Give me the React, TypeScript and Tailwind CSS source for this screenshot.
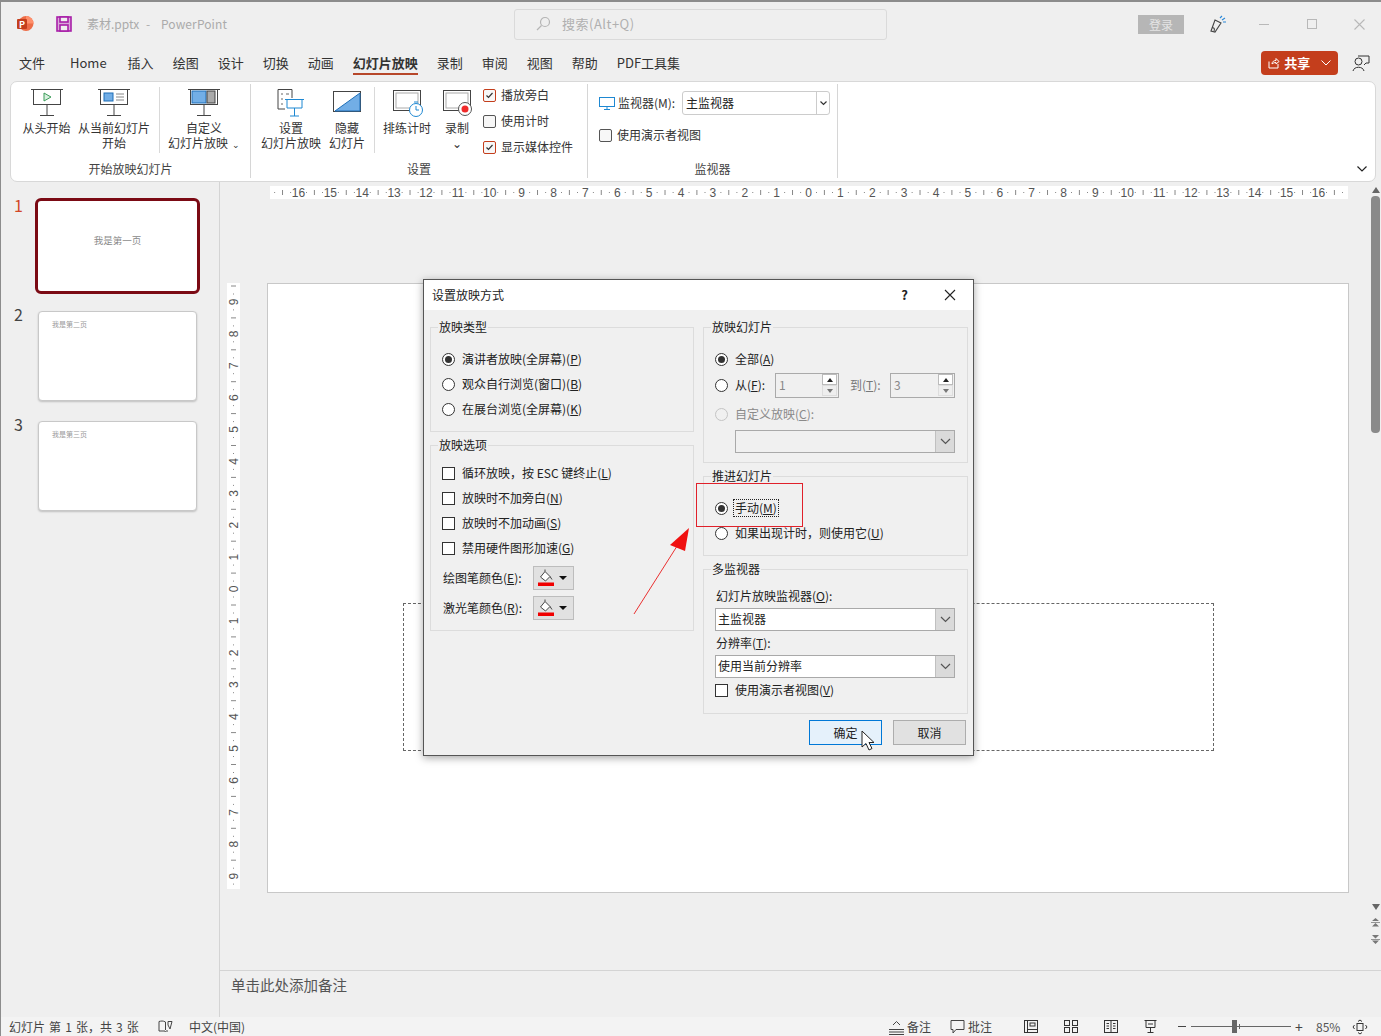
import React from 'react';

const TABS = ['插入', '绘图', '设计', '切换', '动画'];
const TABS2 = ['录制', '审阅', '视图', '帮助', 'PDF工具集'];

function Check({ on, accent }: { on?: boolean; accent?: boolean }) {
  return (
    <span className={`w-[13px] h-[13px] shrink-0 border flex items-center justify-center bg-[#f7f7f7] ${on && accent ? 'border-[#c43e1c] rounded-[2px]' : accent ? 'border-[#555] rounded-[2px]' : 'border-[#333] bg-white'}`}>
      {on && (
        <svg width="11" height="11" viewBox="0 0 11 11" fill="none" stroke="#333" strokeWidth="1.2">
          <path d="M2.5 5.5 L4.5 7.5 L8.5 3" />
        </svg>
      )}
    </span>
  );
}

function Radio({ on, off }: { on?: boolean; off?: boolean }) {
  return (
    <span className={`w-[13px] h-[13px] shrink-0 rounded-full border flex items-center justify-center ${off ? 'border-[#c4c4c4] bg-[#f0f0f0]' : 'border-[#333] bg-white'}`}>
      {on && <span className="w-[7px] h-[7px] rounded-full bg-[#333]" />}
    </span>
  );
}

function Group({ title, className, children }: { title: string; className: string; children: React.ReactNode }) {
  return (
    <fieldset className={`border border-[#dcdcdc] ${className}`}>
      <legend className="-ml-[4px] px-px h-4 leading-4 text-[12px] text-[#222]">{title}</legend>
      {children}
    </fieldset>
  );
}

function Row({ h = 'h-[25px]', children }: { h?: string; children: React.ReactNode }) {
  return <div className={`flex items-center gap-[7px] ${h} [&>span:last-child]:-mt-px`}>{children}</div>;
}

function Combo({ text, off }: { text?: string; off?: boolean }) {
  return (
    <div className={`flex border border-[#a9a9a9] h-[23px] items-stretch ${off ? 'bg-[#f0f0f0]' : 'bg-white'}`}>
      <span className="flex-1 px-[2px] text-[12px] leading-[20px] text-[#222]">{text}</span>
      <span className="w-[19px] bg-[#dadada] border-l border-[#c0c0c0] flex items-center justify-center">
        <svg width="11" height="7" viewBox="0 0 11 7" fill="none" stroke="#555" strokeWidth="1.2"><path d="M1 1 L5.5 5.5 L10 1" /></svg>
      </span>
    </div>
  );
}

function Spin({ value, w }: { value: string; w: string }) {
  return (
    <div className={`${w} h-[25px] border border-[#aaaaaa] flex items-center pl-[3px] bg-[#f0f0f0] text-[12px] text-[#888]`}>
      <span className="flex-1">{value}</span>
      <div className="w-[15px] h-[22px] mr-px flex flex-col">
        <span className="h-[11px] bg-white border border-[#bbb] flex items-center justify-center">
          <span className="w-0 h-0 border-x-[3px] border-x-transparent border-b-[4px] border-b-[#222]" />
        </span>
        <span className="h-[11px] bg-[#eee] border border-[#ddd] flex items-center justify-center">
          <span className="w-0 h-0 border-x-[3px] border-x-transparent border-t-[4px] border-t-[#777]" />
        </span>
      </div>
    </div>
  );
}

function PenColor({ label }: { label: React.ReactNode }) {
  return (
    <div className="flex items-center h-[30px]">
      <span className="w-[91px] pl-px text-[12px] text-[#222]">{label}</span>
      <span className="w-[41px] h-[24px] bg-[#e1e1e1] border border-[#bdbdbd] flex items-center pl-[3px] gap-[4px]">
        <svg width="18" height="18" viewBox="0 0 18 18" fill="none">
          <path d="M3.5 8 L8 2.5 L13 7.5 L8.5 12 Z" fill="#fff" stroke="#444" />
          <path d="M8 2.5 V0.5 M13 7.5 L15 10.5" stroke="#444" />
          <rect x="1" y="13.5" width="16" height="3.5" fill="#f00000" />
        </svg>
        <span className="w-0 h-0 border-x-[4px] border-x-transparent border-t-[4px] border-t-[#111]" />
      </span>
    </div>
  );
}

function Screen({ children }: { children: React.ReactNode }) {
  return (
    <svg width="34" height="32" viewBox="0 0 34 32" fill="none" stroke="#444" strokeWidth="1">
      <path d="M1 1.5 H33" />
      <rect x="3.5" y="1.5" width="27" height="15" fill="#fff" />
      <path d="M17 16.5 V27.5 M10 27.5 H24" />
      {children}
    </svg>
  );
}

function RibbonBtn({ w, lines, icon, chevron }: { w: string; lines: string[]; icon: React.ReactNode; chevron?: boolean }) {
  return (
    <div className={`${w} shrink-0 flex flex-col items-center pt-[4px]`}>
      <div className="h-[31px] flex items-start justify-center">{icon}</div>
      <div className="text-[12px] leading-[15px] text-[#333] text-center whitespace-nowrap mt-[1px]">
        {lines.map((l, i) => (
          <div key={i}>{l}{chevron && i === lines.length - 1 && <span className="text-[9px] ml-1">⌄</span>}</div>
        ))}
      </div>
    </div>
  );
}

function RibbonGroup({ w, title, children }: { w: string; title: string; children: React.ReactNode }) {
  return (
    <div className={`${w} shrink-0 flex flex-col border-r border-[#d6d6d6] h-[94px] mt-[2px]`}>
      <div className="flex h-[74px] items-start">{children}</div>
      <div className="text-[12px] leading-[16px] text-center text-[#444] mt-[3px]">{title}</div>
    </div>
  );
}

const Sep = () => <span className="w-px h-[66px] bg-[#d9d9d9] shrink-0 mt-[3px]" />;

function HRuler() {
  const items = Array.from({ length: 35 }, (_, k) => k - 17);
  return (
    <svg width="1078" height="13" className="bg-white block overflow-visible font-['Liberation_Sans',sans-serif]">
      {items.map((i) => {
        const x = 538.5 + i * 31.875;
        return (
          <g key={i}>
            {Math.abs(i) <= 16 && <text x={x} y="11" textAnchor="middle" fontSize="12" fill="#555">{Math.abs(i)}</text>}
            {x + 16 < 1078 && x + 16 > 0 && <path d={`M${x + 15.9} 4 V9`} stroke="#888" />}
            {x + 8 < 1078 && x + 8 > 0 && <path d={`M${x + 8} 6 V7`} stroke="#888" />}
            {x + 24 < 1078 && x + 24 > 0 && <path d={`M${x + 24} 6 V7`} stroke="#888" />}
          </g>
        );
      })}
    </svg>
  );
}

function VRuler() {
  const items = Array.from({ length: 20 }, (_, k) => k - 10);
  return (
    <svg width="13" height="606" className="bg-white block shrink-0 overflow-visible font-['Liberation_Sans',sans-serif]">
      {items.map((i) => {
        const y = 306 + i * 31.9;
        return (
          <g key={i}>
            {Math.abs(i) <= 9 && <text x="0" y="0" transform={`translate(11 ${y}) rotate(-90)`} textAnchor="middle" fontSize="12" fill="#555">{Math.abs(i)}</text>}
            {y + 16 > 0 && y + 16 < 606 && <path d={`M4 ${y + 16} H9`} stroke="#888" />}
            {y + 8 > 0 && y + 8 < 606 && <path d={`M6 ${y + 8} H7`} stroke="#888" />}
            {y + 24 > 0 && y + 24 < 606 && <path d={`M6 ${y + 24} H7`} stroke="#888" />}
          </g>
        );
      })}
    </svg>
  );
}

function Dialog() {
  return (
    <div className="absolute left-[422px] top-[277px] w-[551px] h-[477px] bg-[#f0f0f0] border border-[#555] shadow-[0_2px_8px_rgba(0,0,0,0.35)] flex flex-col text-[#222]">
      <div className="h-[30px] bg-white flex items-center pl-2 shrink-0">
        <span className="text-[12px] flex-1 -mt-px">设置放映方式</span>
        <span className="text-[13px] font-semibold w-[45px] text-center">?</span>
        <span className="w-[46px] flex justify-center">
          <svg width="12" height="12" viewBox="0 0 12 12" stroke="#222" strokeWidth="1.1"><path d="M1 1 L11 11 M11 1 L1 11" /></svg>
        </span>
      </div>
      <div className="flex pl-[6px] pt-[9px] gap-[9px]">
        <div className="w-[264px] flex flex-col gap-[5px]">
          <Group title="放映类型" className="h-[113px] pl-[11px]">
            <div className="pt-[12px] text-[12px]">
              <Row><Radio on /><span>演讲者放映(全屏幕)(<u>P</u>)</span></Row>
              <Row><Radio /><span>观众自行浏览(窗口)(<u>B</u>)</span></Row>
              <Row><Radio /><span>在展台浏览(全屏幕)(<u>K</u>)</span></Row>
            </div>
          </Group>
          <Group title="放映选项" className="h-[194px] pl-[11px]">
            <div className="pt-[8px] text-[12px]">
              <Row><Check /><span>循环放映，按 ESC 键终止(<u>L</u>)</span></Row>
              <Row><Check /><span>放映时不加旁白(<u>N</u>)</span></Row>
              <Row><Check /><span>放映时不加动画(<u>S</u>)</span></Row>
              <Row><Check /><span>禁用硬件图形加速(<u>G</u>)</span></Row>
              <div className="mt-[2px]">
                <PenColor label={<>绘图笔颜色(<u>E</u>):</>} />
                <PenColor label={<>激光笔颜色(<u>R</u>):</>} />
              </div>
            </div>
          </Group>
        </div>
        <div className="w-[265px] flex flex-col gap-[5px]">
          <Group title="放映幻灯片" className="h-[144px] pl-[11px] pr-[12px]">
            <div className="pt-[12px] text-[12px]">
              <Row><Radio on /><span>全部(<u>A</u>)</span></Row>
              <Row h="h-[26px]">
                <Radio />
                <span className="w-[33px]">从(<u>F</u>):</span>
                <Spin value="1" w="w-[64px]" />
                <span className="text-[#777] ml-[4px] w-[33px]">到(<u>T</u>):</span>
                <Spin value="3" w="w-[65px]" />
              </Row>
              <div className="h-[3px]" />
              <Row h="h-[26px]"><Radio off /><span className="text-[#8a8a8a]">自定义放映(<u>C</u>):</span></Row>
              <div className="ml-[20px] mt-[3px]"><Combo off /></div>
            </div>
          </Group>
          <Group title="推进幻灯片" className="h-[88px] pl-[11px]">
            <div className="pt-[12px] text-[12px]">
              <Row>
                <Radio on />
                <span className="border border-dotted border-[#222] -ml-[2px] px-px h-[18px] leading-[16px]">手动(<u>M</u>)</span>
              </Row>
              <Row><Radio /><span>如果出现计时，则使用它(<u>U</u>)</span></Row>
            </div>
          </Group>
          <Group title="多监视器" className="h-[153px] pl-[11px] pr-[12px]">
            <div className="pt-[10px] text-[12px]">
              <div className="h-[18px] leading-[18px] pl-px">幻灯片放映监视器(<u>O</u>):</div>
              <div className="mt-[3px]"><Combo text="主监视器" /></div>
              <div className="h-[18px] leading-[18px] pl-px mt-[3px]">分辨率(<u>T</u>):</div>
              <div className="mt-[3px]"><Combo text="使用当前分辨率" /></div>
              <Row h="h-[25px]"><Check /><span>使用演示者视图(<u>V</u>)</span></Row>
            </div>
          </Group>
        </div>
      </div>
      <div className="flex justify-end gap-[11px] pr-[7px] mt-[6px] text-[12px]">
        <button className="w-[73px] h-[25px] border border-[#0078d7] bg-[#e5f1fb]">确定</button>
        <button className="w-[73px] h-[25px] border border-[#adadad] bg-[#e1e1e1]">取消</button>
      </div>
    </div>
  );
}

export default function App() {
  return (
    <div className="relative w-[1381px] h-[1036px] overflow-hidden bg-[#efefef] border-t-2 border-l border-[#8c8c8c] font-['Noto_Sans_CJK_SC',sans-serif] flex flex-col text-[#333]">
      {/* title bar */}
      <div className="h-[44px] shrink-0 flex items-center pl-[14px]">
        <svg width="20" height="20" viewBox="0 0 20 20" className="shrink-0">
          <circle cx="11" cy="9.5" r="7.5" fill="#ed6c47" />
          <path d="M11 2 A7.5 7.5 0 0 1 18.5 9.5 H11 Z" fill="#ff8f6b" />
          <rect x="2" y="5" width="10" height="10" rx="1" fill="#c43e1c" />
          <text x="4" y="13.5" fontSize="9" fontWeight="700" fill="#fff">P</text>
        </svg>
        <svg width="18" height="18" viewBox="0 0 18 18" className="ml-[20px] shrink-0" fill="none" stroke="#a81fa8" strokeWidth="1.6">
          <rect x="2" y="2" width="14" height="14" fill="#d9a8d9" />
          <rect x="5" y="2" width="8" height="5" fill="#efefef" />
          <rect x="5" y="10" width="8" height="6" fill="#efefef" />
        </svg>
        <span className="ml-[14px] text-[12px] text-[#ababab] w-[59px]">素材.pptx</span>
        <span className="text-[12px] text-[#ababab] w-[15px]">-</span>
        <span className="text-[12px] text-[#ababab] w-[65px] tracking-[0.1px]">PowerPoint</span>
        <div className="ml-[288px] w-[373px] h-[31px] border border-[#dadada] rounded-[3px] flex items-center pl-[20px] shrink-0">
          <svg width="16" height="16" viewBox="0 0 16 16" fill="none" stroke="#b5b5b5" strokeWidth="1.2"><circle cx="10" cy="6" r="4.5" /><path d="M6.5 9.5 L2 14" /></svg>
          <span className="ml-[11px] text-[13px] text-[#b0b0b0] tracking-[0.5px]">搜索(Alt+Q)</span>
        </div>
        <span className="ml-[251px] w-[46px] h-[19px] bg-[#b6b6b6] text-[#e4e4e4] text-[12px] leading-[19px] text-center shrink-0">登录</span>
        <svg width="20" height="20" viewBox="0 0 20 20" className="ml-[23px] shrink-0" fill="none" stroke="#444" strokeWidth="1.1">
          <path d="M4 17 L8 6 L14 9 L8 18 Z M5 14 C7 13 8 15 7 17" />
          <path d="M13 4 L15 2 M15 6 L18 4 M16 8 H19" stroke="#2b88d8" />
        </svg>
        <span className="ml-[32px] w-[10px] h-px bg-[#b8b8b8]" />
        <span className="ml-[38px] w-[10px] h-[10px] border border-[#b8b8b8]" />
        <svg width="11" height="11" viewBox="0 0 11 11" className="ml-[37px]" stroke="#b8b8b8" strokeWidth="1.1"><path d="M0.5 0.5 L10.5 10.5 M10.5 0.5 L0.5 10.5" /></svg>
      </div>

      {/* tabs */}
      <div className="h-[35px] shrink-0 flex items-start text-[13px] leading-[34px] text-[#333] pl-[18px]">
        <span>文件</span>
        <span className="ml-[25px] text-[13px]">Home</span>
        <div className="ml-[21px] flex gap-[19px]">
          {TABS.map((t) => <span key={t}>{t}</span>)}
          <span className="font-bold border-b-[2px] border-[#b7472a] h-[29px] leading-[34px] tracking-[0px]">幻灯片放映</span>
          {TABS2.map((t) => <span key={t}>{t}</span>)}
        </div>
        <div className="ml-[581px] mt-[5px] w-[77px] h-[24px] bg-[#c43e1c] rounded-[4px] flex items-center pl-[7px] text-white">
          <svg width="12" height="12" viewBox="0 0 12 12" fill="none" stroke="#fff"><path d="M1 4.5 V11 H10 V7 M4 7 C4 4.5 6 3.5 8 3.5 V1.5 L11 4.5 L8 7 V5.5 C6.5 5.5 5 6 4 7 Z" /></svg>
          <span className="ml-[4px] text-[13px] leading-[20px] font-bold">共享</span>
          <svg width="10" height="6" viewBox="0 0 10 6" className="ml-[11px]" fill="none" stroke="#fff"><path d="M0.5 0.5 L5 5 L9.5 0.5" /></svg>
        </div>
        <svg width="18" height="18" viewBox="0 0 18 18" className="ml-[14px] mt-[8px]" fill="none" stroke="#333">
          <circle cx="6.5" cy="7.5" r="3.5" /><path d="M1 17 C2 12 11 12 12 17" /><path d="M6 2 H17 V9 H14 L12 11" />
        </svg>
      </div>

      {/* ribbon */}
      <div className="ml-[9px] mr-[5px] h-[101px] shrink-0 bg-white rounded-[7px] border border-[#d8d8d8] flex">
        <RibbonGroup w="w-[240px]" title="开始放映幻灯片">
          <div className="w-[8px]" />
          <RibbonBtn w="w-[55px]" lines={['从头开始']} icon={<Screen><path d="M14 5 L21 9 L14 13 Z" stroke="#3c9c5a" fill="#d8f0df" /></Screen>} />
          <RibbonBtn w="w-[80px]" lines={['从当前幻灯片', '开始']} icon={<Screen><rect x="7" y="5" width="9" height="8" fill="#72aee6" stroke="#1e6fb8" /><path d="M19 6 H27 M19 9 H27 M19 12 H27" stroke="#888" /></Screen>} />
          <div className="w-[5px]" />
          <Sep />
          <div className="w-[2px]" />
          <RibbonBtn w="w-[84px]" lines={['自定义', '幻灯片放映']} chevron icon={<Screen><rect x="5" y="3" width="14" height="12" fill="#72aee6" stroke="#1e6fb8" /><rect x="20" y="3" width="8" height="12" fill="#aaa" /></Screen>} />
        </RibbonGroup>
        <RibbonGroup w="w-[337px]" title="设置">
          <div className="w-[8px]" />
          <RibbonBtn w="w-[64px]" lines={['设置', '幻灯片放映']} icon={
            <svg width="34" height="32" viewBox="0 0 34 32" fill="none" stroke="#444">
              <path d="M4 1.5 H18 V10 M4 1.5 V21 H11" />
              <path d="M7 6 H9 M12 6 H15 M7 11 H9 M7 16 H9" stroke="#666" />
              <path d="M11 11.5 H30 M13 11.5 V20 H28 V11.5 M20.5 20 V28 M16 28 H25" stroke="#1e88d2" />
            </svg>
          } />
          <div className="w-[4px]" />
          <RibbonBtn w="w-[40px]" lines={['隐藏', '幻灯片']} icon={
            <svg width="30" height="32" viewBox="0 0 30 32" fill="none" stroke="#444">
              <rect x="1.5" y="3.5" width="27" height="20" fill="#fff" />
              <path d="M3 23 L28 5 V23 Z" fill="#72aee6" stroke="#1e6fb8" />
            </svg>
          } />
          <div className="w-[7px]" />
          <Sep />
          <div className="w-[4px]" />
          <RibbonBtn w="w-[56px]" lines={['排练计时']} icon={
            <svg width="34" height="32" viewBox="0 0 34 32" fill="none" stroke="#444">
              <rect x="3.5" y="2.5" width="27" height="20" /><rect x="6" y="5" width="22" height="15" stroke="#aaa" />
              <circle cx="26" cy="22" r="6.5" fill="#fff" stroke="#1e88d2" /><path d="M26 18 V22 H29 M24 14 H28" stroke="#1e88d2" />
            </svg>
          } />
          <div className="w-[4px]" />
          <RibbonBtn w="w-[36px]" lines={['录制', '⌄']} icon={
            <svg width="34" height="32" viewBox="0 0 34 32" fill="none" stroke="#444">
              <rect x="3.5" y="2.5" width="27" height="20" /><rect x="6" y="5" width="22" height="15" stroke="#aaa" />
              <circle cx="25" cy="21" r="6.5" fill="#fff" stroke="#555" /><circle cx="25" cy="21" r="3.5" fill="#f02a2a" stroke="none" />
            </svg>
          } />
          <div className="w-[8px]" />
          <div className="flex flex-col text-[12px] text-[#333] -mt-[2px]">
            <div className="flex items-center gap-[5px] h-[26px]"><Check on accent />播放旁白</div>
            <div className="flex items-center gap-[5px] h-[26px]"><Check accent />使用计时</div>
            <div className="flex items-center gap-[5px] h-[26px]"><Check on accent />显示媒体控件</div>
          </div>
        </RibbonGroup>
        <RibbonGroup w="w-[250px]" title="监视器">
          <div className="pl-[11px] pt-[7px] flex flex-col">
            <div className="flex items-center h-[24px] text-[12px] text-[#333]">
              <svg width="16" height="13" viewBox="0 0 16 13" fill="none" stroke="#1e88d2"><rect x="0.5" y="0.5" width="15" height="9" /><path d="M8 10 V12 M5 12.5 H11" /></svg>
              <span className="ml-[3px] w-[64px] text-[#333]">监视器(M):</span>
              <div className="w-[148px] h-[24px] border border-[#ccc] rounded-[3px] flex items-center bg-white">
                <span className="flex-1 pl-[3px] text-[#222]">主监视器</span>
                <span className="w-[13px] h-full border-l border-[#ccc] flex items-center justify-center">
                  <svg width="7" height="5" viewBox="0 0 7 5" fill="none" stroke="#333" strokeWidth="1.2"><path d="M0.5 0.5 L3.5 3.5 L6.5 0.5" /></svg>
                </span>
              </div>
            </div>
            <div className="flex items-center gap-[5px] h-[14px] mt-[13px] text-[12px]"><Check accent />使用演示者视图</div>
          </div>
        </RibbonGroup>
        <div className="flex-1 flex justify-end items-end pr-[8px] pb-[9px]">
          <svg width="10" height="6" viewBox="0 0 10 6" fill="none" stroke="#222" strokeWidth="1.2"><path d="M0.5 0.5 L5 5 L9.5 0.5" /></svg>
        </div>
      </div>

      {/* main */}
      <div className="flex-1 flex min-h-0">
        <div className="w-[219px] shrink-0 border-r border-[#d4d4d4] pt-[16px]">
          <div className="flex items-start pl-[13px]">
            <span className="w-[21px] text-[16px] leading-[16px] -mt-px text-[#d24726]">1</span>
            <div className="w-[165px] h-[96px] bg-white rounded-[6px] border-[3px] border-[#7b0a14] flex items-center justify-center">
              <span className="text-[9.5px] text-[#8a8a8a] -mt-[11px]">我是第一页</span>
            </div>
          </div>
          <div className="flex items-start pl-[13px] mt-[17px]">
            <span className="w-[24px] text-[16px] leading-[16px] -mt-[5px] text-[#444]">2</span>
            <div className="w-[159px] h-[90px] bg-white rounded-[4px] border border-[#c8c8c8] shadow-[0_1px_2px_rgba(0,0,0,0.2)] pl-[13px] pt-[7px] text-[7px] leading-[10px] text-[#999]">我是第二页</div>
          </div>
          <div className="flex items-start pl-[13px] mt-[20px]">
            <span className="w-[24px] text-[16px] leading-[16px] -mt-[5px] text-[#444]">3</span>
            <div className="w-[159px] h-[90px] bg-white rounded-[4px] border border-[#c8c8c8] shadow-[0_1px_2px_rgba(0,0,0,0.2)] pl-[13px] pt-[7px] text-[7px] leading-[10px] text-[#999]">我是第三页</div>
          </div>
        </div>
        <div className="flex-1 flex flex-col min-w-0">
          <div className="flex-1 flex min-h-0">
            <div className="flex-1 flex flex-col min-w-0">
              <div className="pl-[50px] pt-[4px]"><HRuler /></div>
              <div className="flex pl-[7px] pt-[84px]">
                <VRuler />
                <div className="ml-[27px] w-[1082px] h-[610px] bg-white border border-[#c8c8c8] pl-[135px] pt-[319px]">
                  <div className="w-[811px] h-[148px] border border-dashed border-[#666]" />
                </div>
              </div>
            </div>
            <div className="w-[11px] shrink-0 flex flex-col items-center pt-[5px] bg-[#efefef]">
              <span className="w-0 h-0 border-x-[4px] border-x-transparent border-b-[6px] border-b-[#666]" />
              <span className="w-[9px] h-[237px] bg-[#8a8a8a] rounded-[4px] mt-[3px]" />
              <span className="mt-[471px] w-0 h-0 border-x-[4px] border-x-transparent border-t-[6px] border-t-[#666]" />
              <svg width="9" height="9" viewBox="0 0 9 9" className="mt-[8px]" fill="#777"><path d="M4.5 0 L8 3 H1 Z M0 4 H9 V4.8 H0 Z M4.5 5 L8 8.5 H1 Z" /></svg>
              <svg width="9" height="9" viewBox="0 0 9 9" className="mt-[8px]" fill="#777"><path d="M1 0 H8 L4.5 3.5 Z M0 4.2 H9 V5 H0 Z M1 5.5 H8 L4.5 9 Z" /></svg>
            </div>
          </div>
          <div className="h-[47px] shrink-0 border-t border-[#d4d4d4] pl-[11px] pt-[3px] text-[14.5px] leading-[22px] text-[#555]">单击此处添加备注</div>
        </div>
      </div>

      {/* status */}
      <div className="h-[19px] shrink-0 bg-[#f3f3f3] flex items-center text-[12px] text-[#444] pl-[8px]">
        <span className="w-[131px] whitespace-nowrap [word-spacing:1.4px]">幻灯片 第 1 张，共 3 张</span>
        <svg width="15" height="13" viewBox="0 0 15 13" className="ml-[18px]" fill="none" stroke="#444"><path d="M7.5 2 C5 0.5 3 1 1 1.5 V11 H7 L7.5 12 M7.5 2 V10 M8 11 H10 M10 1.5 H14 L12 9 L10 5 Z" /></svg>
        <span className="ml-[16px] w-[57px]">中文(中国)</span>
        <svg width="17" height="16" viewBox="0 0 17 16" className="ml-[642px]" fill="none" stroke="#444"><path d="M1 10.5 H16 M1 13 H16 M1 15.5 H16 M5 6 L8.5 2.5 L12 6" /></svg>
        <span className="ml-[2px] w-[24px]">备注</span>
        <svg width="15" height="15" viewBox="0 0 15 15" className="ml-[19px]" fill="none" stroke="#444"><path d="M1 1.5 H14 V10.5 H6 L3 14 V10.5 H1 Z" /></svg>
        <span className="ml-[3px] w-[24px]">批注</span>
        <svg width="14" height="13" viewBox="0 0 14 13" className="ml-[32px]" fill="none" stroke="#333"><rect x="0.5" y="0.5" width="13" height="12" /><path d="M3.5 0.5 V12.5 M3.5 9.5 H13.5" /><rect x="6" y="3" width="5" height="3" /></svg>
        <svg width="14" height="13" viewBox="0 0 14 13" className="ml-[26px]" fill="none" stroke="#333"><rect x="0.5" y="0.5" width="5" height="5" /><rect x="8.5" y="0.5" width="5" height="5" /><rect x="0.5" y="7.5" width="5" height="5" /><rect x="8.5" y="7.5" width="5" height="5" /></svg>
        <svg width="14" height="13" viewBox="0 0 14 13" className="ml-[26px]" fill="none" stroke="#333"><rect x="0.5" y="0.5" width="13" height="12" /><path d="M7 0.5 V12.5 M2.5 3.5 H5 M2.5 6 H5 M2.5 8.5 H5 M9 3.5 H11.5 M9 6 H11.5 M9 8.5 H11.5" /></svg>
        <svg width="13" height="13" viewBox="0 0 13 13" className="ml-[26px]" fill="none" stroke="#333"><path d="M0.5 0.5 H12.5 M2 0.5 V7.5 H11 V0.5 M6.5 7.5 V12.5 M3.5 12.5 H9.5 M4 4 H9" /></svg>
        <span className="ml-[21px] w-[8px] h-px bg-[#444]" />
        <div className="ml-[5px] w-[100px] h-px bg-[#666] flex items-center">
          <span className="ml-[41px] w-[5px] h-[13px] bg-[#666]" />
          <span className="ml-[2px] w-px h-[5px] bg-[#666]" />
        </div>
        <span className="ml-[4px] text-[14px] leading-[14px] text-[#444] w-[11px]">+</span>
        <span className="ml-[10px] text-[12px] w-[26px] text-[#555]">85%</span>
        <svg width="16" height="16" viewBox="0 0 16 16" className="ml-[10px]" fill="none" stroke="#333"><rect x="5" y="4.5" width="6" height="7" /><path d="M6 2.5 L8 1 L10 2.5 M6 13.5 L8 15 L10 13.5 M2.5 6 L1 8 L2.5 10 M13.5 6 L15 8 L13.5 10" /></svg>
      </div>

      <Dialog />

      {/* annotations */}
      <div className="absolute left-[695px] top-[481px] w-[107px] h-[44px] border border-[#e0202a] pointer-events-none" />
      <svg width="70" height="100" viewBox="0 0 70 100" className="absolute left-[628px] top-[521px]" fill="none">
        <path d="M5 91 L50 20" stroke="#ea3030" strokeWidth="1" />
        <path d="M60 5 L41 22 L56 28 Z" fill="#f01010" />
      </svg>
      <svg width="15" height="22" viewBox="0 0 15 22" className="absolute left-[860px] top-[728px]" fill="#fff" stroke="#222">
        <path d="M1 1 V17 L5 13.5 L8 20 L11 18.5 L8 12.5 H13 Z" />
      </svg>
    </div>
  );
}
